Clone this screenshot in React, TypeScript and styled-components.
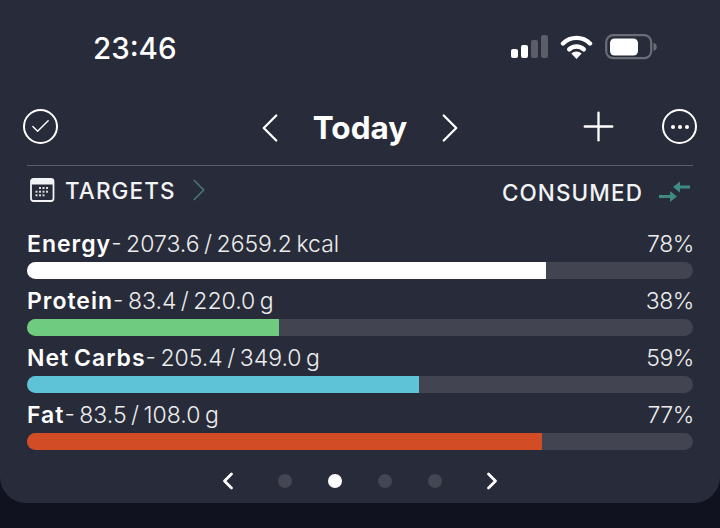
import React from "react";
import styled, { createGlobalStyle } from "styled-components";
import { Check, ChevronLeft, ChevronRight, Plus } from "lucide-react";

const GlobalStyle = createGlobalStyle`
  html, body {
    margin: 0;
    padding: 0;
    background: #10121f;
    font-family: Inter, "Liberation Sans", sans-serif;
  }
`;

const Page = styled.div`
  width: 720px;
  height: 528px;
  overflow: hidden;
  background: #10121f;
`;

const Panel = styled.div`
  height: 503px;
  box-sizing: border-box;
  background: #282b39;
  border-radius: 0 0 26px 26px;
  padding: 0 27px;
`;

const StatusBar = styled.div`
  height: 98px;
  display: flex;
  align-items: flex-start;
  justify-content: space-between;
  padding: 29px 36px 0 66px;
  box-sizing: border-box;
`;

const Clock = styled.div`
  color: #fff;
  font-size: 29.5px;
  line-height: 38px;
  font-weight: 500;
`;

const StatusIcons = styled.div`
  display: flex;
  align-items: center;
  gap: 12px;
  margin-top: 5px;
`;

const Header = styled.div`
  height: 68px;
  display: grid;
  grid-template-columns: 1fr auto 1fr;
  align-items: center;
  border-bottom: 1.5px solid #5a5c68;
  box-sizing: border-box;
`;

const RoundIcon = styled.div`
  width: 35px;
  height: 35px;
  box-sizing: border-box;
  border: 2.2px solid #fff;
  border-radius: 50%;
  display: flex;
  align-items: center;
  justify-content: center;
  color: #fff;
  gap: 3px;
`;

const CheckSlot = styled.div`
  margin-left: -4px;
  margin-top: -10px;
`;

const DateNav = styled.div`
  display: flex;
  align-items: center;
  gap: 14px;
  color: #fff;
  margin-top: -8px;
`;

const Title = styled.div`
  font-size: 31.5px;
  line-height: 36px;
  font-weight: 700;
  width: 102px;
  text-align: center;
`;

const Actions = styled.div`
  display: flex;
  align-items: center;
  justify-self: end;
  gap: 40px;
  color: #fff;
  margin-top: -10px;
  margin-right: -4px;
`;

const Dot = styled.span`
  width: 4px;
  height: 4px;
  border-radius: 50%;
  background: #fff;
`;

const SummaryRow = styled.div`
  display: flex;
  justify-content: space-between;
  align-items: center;
  height: 52px;
  padding: 0 2px 0 3px;
  box-sizing: border-box;
`;

const SummaryLabel = styled.div`
  display: flex;
  align-items: center;
  gap: 10px;
  color: #f2f3f5;
  font-size: 22.5px;
  font-weight: 500;
  letter-spacing: 1.1px;
  margin-top: -4px;
`;

const ConsumedLabel = styled(SummaryLabel)`
  gap: 16px;
  margin-top: 0;
`;

const TargetsChevron = styled(ChevronRight)`
  margin-left: -6px;
`;

const Bars = styled.div`
  display: flex;
  flex-direction: column;
  gap: 7px;
  margin-top: 11px;
`;

const Row = styled.div`
  display: flex;
  flex-direction: column;
  gap: 4px;
`;

const Labels = styled.div`
  display: flex;
  justify-content: space-between;
  align-items: baseline;
  height: 29px;
  line-height: 31px;
  color: #eceded;
  font-size: 23px;
  font-weight: 300;
  letter-spacing: 0;
  word-spacing: -2px;
`;

const Name = styled.span`
  color: #fff;
  font-weight: 600;
  letter-spacing: 1px;
`;

const Percent = styled.span`
  margin-right: -1px;
  letter-spacing: -0.4px;
`;

const Track = styled.div`
  height: 17px;
  border-radius: 9px;
  background: #434451;
  overflow: hidden;
`;

const Fill = styled.div<{ $color: string }>`
  height: 100%;
  background: ${p => p.$color};
`;

const Pager = styled.div`
  display: flex;
  align-items: center;
  justify-content: center;
  gap: 36px;
  margin-top: 17px;
  color: #fff;
`;

const PagerDot = styled.span<{ $active?: boolean }>`
  width: 14px;
  height: 14px;
  border-radius: 50%;
  background: ${p => (p.$active ? "#fff" : "#444653")};
`;

const SignalIcon = () => (
  <svg width="37" height="24" viewBox="0 0 37 24">
    <rect x="0" y="14" width="7" height="9" rx="2" fill="#fff" />
    <rect x="10" y="10" width="7" height="13" rx="2" fill="#fff" />
    <rect x="20" y="5" width="7" height="18" rx="2" fill="#5b5d68" />
    <rect x="30" y="0" width="7" height="23" rx="2" fill="#5b5d68" />
  </svg>
);

const WifiIcon = () => (
  <svg width="33" height="26" viewBox="0 0 33 26">
    <path d="M3 9.5a19 19 0 0 1 27 0" fill="none" stroke="#fff" strokeWidth="4.4" strokeLinecap="round" />
    <path d="M9.2 15.4a10.5 10.5 0 0 1 14.6 0" fill="none" stroke="#fff" strokeWidth="4.4" strokeLinecap="round" />
    <path d="M16.5 25l-5.2-5.4a7.2 7.2 0 0 1 10.4 0z" fill="#fff" />
  </svg>
);

const BatteryIcon = () => (
  <svg width="52" height="26" viewBox="0 0 52 26">
    <rect x="1.2" y="1.2" width="45" height="23" rx="7" fill="none" stroke="#6a6c77" strokeWidth="2.2" />
    <rect x="5" y="4.5" width="28" height="17" rx="4.5" fill="#fff" />
    <path d="M48.5 9c2.3.6 3.3 2.2 3.3 4s-1 3.4-3.3 4z" fill="#6a6c77" />
  </svg>
);

const calendarDots = [
  [10, 10],
  [13.5, 10],
  [17, 10],
  [6.5, 13.7],
  [10, 13.7],
  [13.5, 13.7],
  [17, 13.7],
  [6.5, 17.3],
  [10, 17.3],
  [13.5, 17.3],
];

const CalendarIcon = () => (
  <svg width="25" height="24" viewBox="0 0 25 24">
    <rect x="1" y="1" width="22.5" height="22" rx="2.5" fill="none" stroke="#f2f3f5" strokeWidth="1.8" />
    <path d="M1 3.5a2.5 2.5 0 0 1 2.5-2.5h17.500a2.500 2.500 0 0 1 2.500 2.500V6.500H1z" fill="#f2f3f5" />
    {calendarDots.map(([x, y]) => (
      <rect key={`${x}-${y}`} x={x - 1} y={y - 1} width="2" height="2" fill="#d9dadd" />
    ))}
  </svg>
);

const SwapIcon = () => (
  <svg width="32" height="22" viewBox="0 0 32 22" fill="#3f8a83">
    <rect x="19" y="4.500" width="12" height="3" />
    <path d="M21 0.500v11l-7-5.500z" />
    <rect x="0" y="14" width="12" height="3" />
    <path d="M11 10v11l7-5.500z" />
  </svg>
);

const metrics = [
  { name: "Energy", values: "2073.6 / 2659.2 kcal", percent: 78, color: "#ffffff" },
  { name: "Protein", values: "83.4 / 220.0 g", percent: 37.9, color: "#6fcb7f" },
  { name: "Net Carbs", values: "205.4 / 349.0 g", percent: 58.9, color: "#5fc3d8" },
  { name: "Fat", values: "83.5 / 108.0 g", percent: 77.4, color: "#d24c25" },
];

const App = () => {
  return (
    <Page>
      <GlobalStyle />
      <Panel>
        <StatusBar>
          <Clock>23:46</Clock>
          <StatusIcons>
            <SignalIcon />
            <WifiIcon />
            <BatteryIcon />
          </StatusIcons>
        </StatusBar>
        <Header>
          <CheckSlot>
            <RoundIcon>
              <Check size={23} strokeWidth={1.5} />
            </RoundIcon>
          </CheckSlot>
          <DateNav>
            <ChevronLeft size={50} strokeWidth={1.1} />
            <Title>Today</Title>
            <ChevronRight size={50} strokeWidth={1.1} />
          </DateNav>
          <Actions>
            <Plus size={47} strokeWidth={1.2} />
            <RoundIcon>
              <Dot />
              <Dot />
              <Dot />
            </RoundIcon>
          </Actions>
        </Header>
        <SummaryRow>
          <SummaryLabel>
            <CalendarIcon />
            TARGETS
            <TargetsChevron size={38} strokeWidth={1.1} color="#47757a" />
          </SummaryLabel>
          <ConsumedLabel>
            CONSUMED
            <SwapIcon />
          </ConsumedLabel>
        </SummaryRow>
        <Bars>
          {metrics.map(metric => (
            <Row key={metric.name}>
              <Labels>
                <span>
                  <Name>{metric.name}</Name>- {metric.values}
                </span>
                <Percent>{Math.round(metric.percent)}%</Percent>
              </Labels>
              <Track>
                <Fill $color={metric.color} style={{ width: `${metric.percent}%` }} />
              </Track>
            </Row>
          ))}
        </Bars>
        <Pager>
          <ChevronLeft size={28} strokeWidth={2.4} />
          <PagerDot />
          <PagerDot $active />
          <PagerDot />
          <PagerDot />
          <ChevronRight size={28} strokeWidth={2.4} />
        </Pager>
      </Panel>
    </Page>
  );
};

export default App;
